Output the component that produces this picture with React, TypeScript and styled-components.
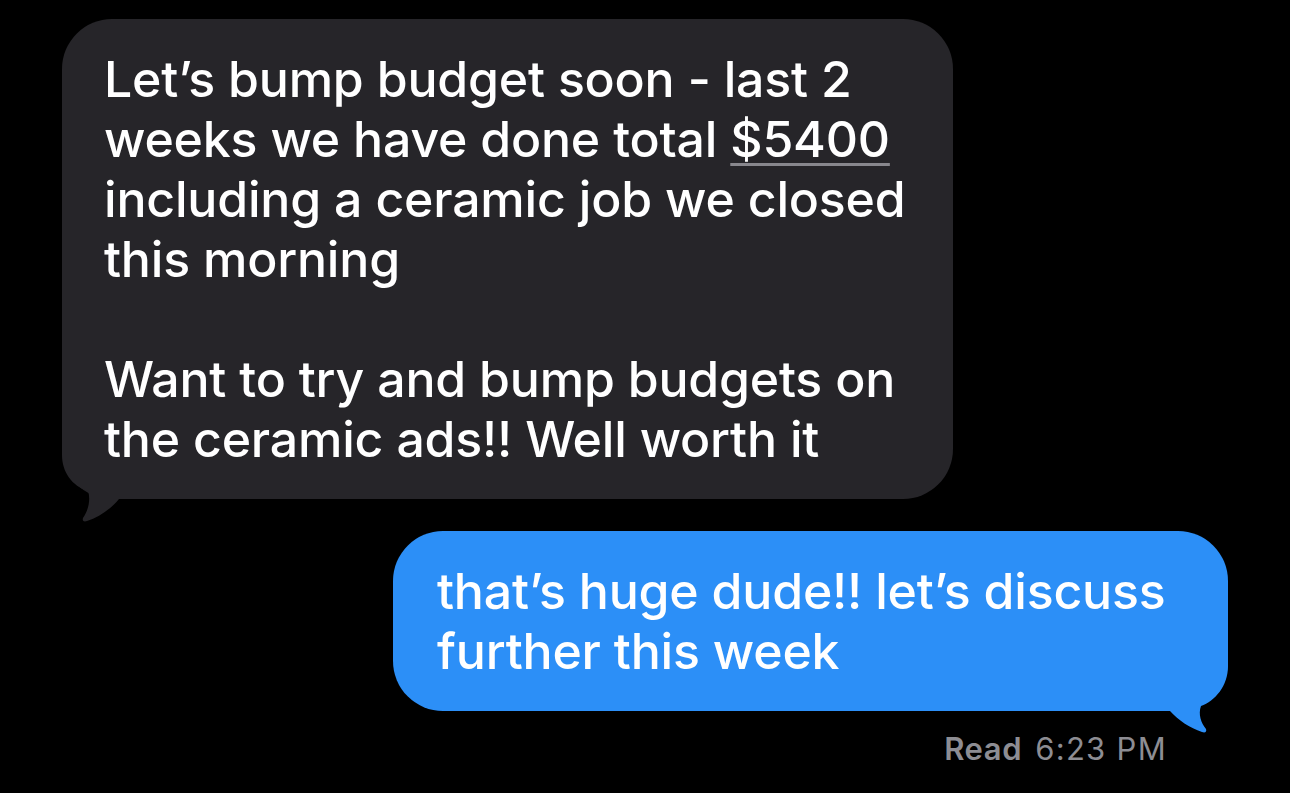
import React from 'react';
import styled, { createGlobalStyle } from 'styled-components';

const GlobalStyle = createGlobalStyle`
  html, body {
    margin: 0;
    padding: 0;
    background: #000;
  }
`;

const Screen = styled.div`
  min-height: 793px;
  box-sizing: border-box;
  padding: 19px 62px 0 62px;
  display: flex;
  flex-direction: column;
  font-family: Inter, "Liberation Sans", sans-serif;
  background: #000;
`;

const Bubble = styled.div<{ $sent?: boolean; $width: number }>`
  position: relative;
  box-sizing: border-box;
  width: ${p => p.$width}px;
  align-self: ${p => (p.$sent ? 'flex-end' : 'flex-start')};
  margin-top: ${p => (p.$sent ? 32 : 0)}px;
  padding: ${p => (p.$sent ? '30px 30px 30px 44px' : '30px 30px 30px 42px')};
  border-radius: 50px;
  background: ${p => (p.$sent ? '#2c8ff7' : '#262529')};
  color: #fff;
  font-size: 50px;
  line-height: 60px;
  font-weight: 500;
  letter-spacing: -0.2px;
`;

const Body = styled.span`
  position: relative;
  z-index: 1;
  white-space: pre-line;
`;

const Tail = styled.svg<{ $sent?: boolean }>`
  position: absolute;
  z-index: 0;
  width: 80px;
  height: ${p => (p.$sent ? 95 : 100)}px;
  bottom: ${p => (p.$sent ? -25 : -30)}px;
  ${p => (p.$sent ? 'right: 0;' : 'left: 0;')}
  overflow: visible;
`;

const Amount = styled.span`
  text-decoration: underline;
  text-decoration-color: #88878d;
  text-decoration-thickness: 3px;
  text-underline-offset: 6px;
`;

const Receipt = styled.div`
  align-self: flex-end;
  margin-top: 20px;
  margin-right: 61px;
  color: #8d8d93;
  font-size: 31px;
  line-height: 36px;
  font-weight: 400;
  letter-spacing: 1.3px;
`;

const ReceiptLabel = styled.span`
  font-weight: 600;
  letter-spacing: 0.6px;
  margin-right: 3px;
`;

export default function App() {
  return (
    <>
      <GlobalStyle />
      <Screen>
        <Bubble $width={891}>
          <Tail viewBox="0 0 80 100">
            <path
              fill="#262529"
              d="M0,1 L0,26 C0,43 10,57 26,62 C29,71 26,82 21,89 C20,92 22,93 25,92 C37,88 49,80 57,70 L78,70 L78,1 Z"
            />
          </Tail>
          <Body>
            {'Let\u2019s bump budget soon - last 2\nweeks we have done total '}
            <Amount>$5400</Amount>
            {'\nincluding a ceramic job we closed\nthis morning\n\nWant to try and bump budgets on\nthe ceramic ads!! Well worth it'}
          </Body>
        </Bubble>
        <Bubble $sent $width={835}>
          <Tail $sent viewBox="0 0 80 95">
            <path
              fill="#2c8ff7"
              d="M80,0 L80,25 C80,45 67,60 53,65 C50,73 53,82 58,88 C59,91 57,92 54,91 C42,87 30,79 22,70 L2,70 L2,0 Z"
            />
          </Tail>
          <Body>{'that\u2019s huge dude!! let\u2019s discuss\nfurther this week'}</Body>
        </Bubble>
        <Receipt>
          <ReceiptLabel>Read</ReceiptLabel> 6:23 PM
        </Receipt>
      </Screen>
    </>
  );
}
